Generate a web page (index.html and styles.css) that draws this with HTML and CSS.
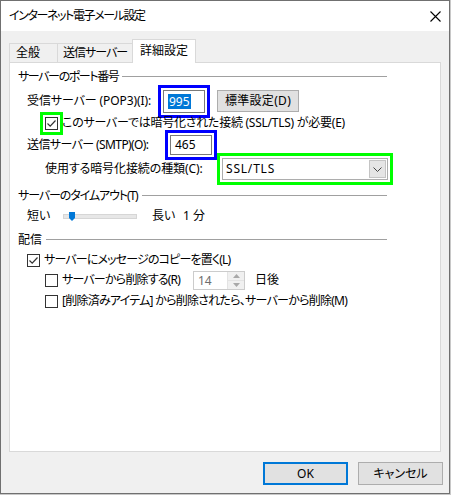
FILE: index.html
```html
<!DOCTYPE html>
<html lang="ja">
<head>
<meta charset="utf-8">
<title>インターネット電子メール設定</title>
<link rel="stylesheet" href="styles.css">
</head>
<body>
<div class="window">
  <div class="titlebar">
    <span class="title">インターネット電子メール設定</span>
    <svg class="close" width="11" height="11" viewBox="0 0 11 11"><path d="M0.5 0.5L10.5 10.5M10.5 0.5L0.5 10.5" stroke="#000" stroke-width="1.1"/></svg>
  </div>
  <div class="content">
    <div class="tabs">
      <div class="tab t1">全般</div>
      <div class="tab t2">送信サーバー</div>
      <div class="tab active">詳細設定</div>
    </div>
    <div class="panel">
      <div class="group g1"><span class="glabel t-port">サーバーのポート番号</span><span class="gline"></span></div>
      <div class="row r1">
        <span class="lbl w1 t-in">受信サーバー (POP3)(I):</span>
        <span class="edit e1 mark-blue"><span class="sel">995</span></span>
        <span class="btn std">標準設定(D)</span>
      </div>
      <div class="row r2">
        <span class="cb mark-green"><svg width="11" height="11" viewBox="0 0 11 11"><path d="M1.5 5.5L4.2 8.2L9.5 2.5" fill="none" stroke="#333" stroke-width="1.2"/></svg></span>
        <span class="cbtext t-ssl">このサーバーでは暗号化された接続 (SSL/TLS) が必要(E)</span>
      </div>
      <div class="row r3">
        <span class="lbl w3 t-out">送信サーバー (SMTP)(O):</span>
        <span class="edit e2 mark-blue">465</span>
      </div>
      <div class="row r4">
        <span class="lbl w4 t-enc">使用する暗号化接続の種類(C):</span>
        <span class="combo mark-green"><span class="ctext">SSL/TLS</span><span class="cbtn"><svg width="9" height="5" viewBox="0 0 9 5"><path d="M0.5 0.5L4.5 4.5L8.5 0.5" fill="none" stroke="#444" stroke-width="1"/></svg></span></span>
      </div>
      <div class="group g2"><span class="glabel t-timeout">サーバーのタイムアウト(T)</span><span class="gline"></span></div>
      <div class="row r5">
        <span class="lbl w5">短い</span>
        <span class="track"><svg class="thumb" width="6" height="9" viewBox="0 0 6 9"><polygon points="0,0 6,0 6,6 3,9 0,6" fill="#0078d7"/></svg></span>
        <span class="lbl w6">長い</span>
        <span class="lbl t-min">1 分</span>
      </div>
      <div class="group g3"><span class="glabel t-plain">配信</span><span class="gline"></span></div>
      <div class="row r6">
        <span class="cb"><svg width="11" height="11" viewBox="0 0 11 11"><path d="M1.5 5.5L4.2 8.2L9.5 2.5" fill="none" stroke="#333" stroke-width="1.2"/></svg></span>
        <span class="cbtext t-copy">サーバーにメッセージのコピーを置く(L)</span>
      </div>
      <div class="row r7">
        <span class="cb"></span>
        <span class="cbtext w7 t-del">サーバーから削除する(R)</span>
        <span class="spin">
          <span class="stext">14</span>
          <span class="sbtns">
            <span class="sbtn"><svg width="7" height="4" viewBox="0 0 7 4"><polygon points="0,4 3.5,0 7,4" fill="#a8a8a8"/></svg></span>
            <span class="sbtn"><svg width="7" height="4" viewBox="0 0 7 4"><polygon points="0,0 3.5,4 7,0" fill="#a8a8a8"/></svg></span>
          </span>
        </span>
        <span class="lbl days">日後</span>
      </div>
      <div class="row r8">
        <span class="cb"></span>
        <span class="cbtext t-delm">[削除済みアイテム] から削除されたら、サーバーから削除(M)</span>
      </div>
    </div>
    <div class="footer">
      <span class="btn big ok">OK</span>
      <span class="btn big">キャンセル</span>
    </div>
  </div>
</div>
</body>
</html>
```

FILE: styles.css
```css
* { box-sizing: border-box; }
html, body { margin: 0; padding: 0; }
body {
  background: #c8c8c8;
  width: 451px;
  height: 495px;
  font-family: "Noto Sans", "Noto Sans CJK JP", sans-serif;
  font-size: 12px;
  letter-spacing: 0;
  color: #000;
  font-feature-settings: "palt";
  line-height: 16px;
}
.window {
  width: 450px;
  height: 494px;
  border: 1px solid #707070;
  background: #f0f0f0;
  display: flex;
  flex-direction: column;
}
.titlebar {
  height: 30px;
  background: #fff;
  display: flex;
  align-items: center;
  padding-left: 8px;
  padding-right: 8px;
}
.title { flex: 1; letter-spacing: -1.4px; }
.close { display: block; }
.content {
  flex: 1;
  padding: 8px 8px 0 8px;
  display: flex;
  flex-direction: column;
}
.tabs {
  display: flex;
  height: 23px;
  align-items: flex-end;
  position: relative;
  z-index: 1;
}
.tab {
  height: 19px;
  border: 1px solid #d9d9d9;
  border-bottom: none;
  background: #f0f0f0;
  display: flex;
  align-items: center;
  white-space: nowrap;
}
.t1 { width: 49px; padding-left: 6px; }
.t2 { width: 74px; border-left: none; border-right: none; padding-left: 5px; letter-spacing: -1px; }
.tab.active {
  width: 64px;
  height: 24px;
  margin-bottom: -1px;
  background: #fff;
  padding-left: 7px;
  padding-bottom: 1px;
}
.panel {
  width: 432px;
  height: 390px;
  border: 1px solid #d9d9d9;
  background: #fff;
  padding-top: 6px;
  display: flex;
  flex-direction: column;
}
.group {
  height: 16px;
  display: flex;
  align-items: center;
  padding-left: 8px;
  margin-right: 53px;
  white-space: nowrap;
}
.g2 { margin-top: 7px; }
.g3 { margin-top: 6px; }
.gline {
  flex: 1;
  height: 1px;
  background: #a0a0a0;
  margin-left: 4px;
  margin-bottom: 2px;
}
.row {
  display: flex;
  align-items: center;
  white-space: nowrap;
}
.r1 { height: 24px; margin-top: 4px; padding-left: 17px; }
.r2 { height: 20px; padding-left: 35px; }
.r3 { height: 24px; padding-left: 17px; }
.r4 { height: 24px; padding-left: 35px; }
.r5 { height: 20px; margin-top: 2px; padding-left: 17px; }
.r6 { height: 20px; margin-top: 2px; padding-left: 17px; }
.r7 { height: 20px; padding-left: 35px; }
.r8 { height: 20px; margin-top: 1px; padding-left: 35px; }
.lbl { display: inline-block; }
.w1 { width: 136px; }
.w3 { width: 143px; }
.w4 { width: 177px; }
.w5 { width: 36px; }
.w6 { width: 31px; margin-left: 15px; }
.w7 { width: 131px; }

/* per-label tracking to match the narrow kana of the original UI font */
.t-port { letter-spacing: -1.4px; }
.t-in { letter-spacing: -0.1px; }
.t-ssl { letter-spacing: -0.25px; }
.t-out { letter-spacing: -0.6px; }
.t-enc { letter-spacing: -0.1px; }
.t-timeout { letter-spacing: -1.1px; }
.t-copy { letter-spacing: -0.85px; }
.t-del { letter-spacing: -0.8px; }
.t-delm { letter-spacing: -0.75px; }
.t-min { letter-spacing: 0; }

.edit {
  display: flex;
  align-items: center;
  width: 42px;
  background: #fff;
  border: 1px solid #7a7a7a;
}
.e1 { height: 23px; padding-left: 4px; }
.e2 { height: 20px; padding-left: 4px; }
.sel {
  background: #0078d7;
  color: #fff;
  padding: 0 1px;
  line-height: 15px;
}
.mark-blue { outline: 3px solid #0000ff; outline-offset: 2px; }
.mark-green { outline: 3px solid #00ff00; outline-offset: 2px; }
.btn {
  display: flex;
  align-items: center;
  justify-content: center;
  background: #e1e1e1;
  border: 1px solid #adadad;
}
.std { width: 82px; height: 22px; margin-left: 12px; letter-spacing: 0.3px; }
.cb {
  width: 13px;
  height: 13px;
  border: 1px solid #333;
  background: #fff;
  margin-right: 4px;
  flex: none;
  display: flex;
  align-items: center;
  justify-content: center;
}
.cb svg { display: block; }
.combo {
  display: flex;
  align-items: center;
  width: 166px;
  height: 22px;
  border: 1px solid #adadad;
  background: #fff;
  padding-left: 3px;
  padding-right: 1px;
}
.ctext { flex: 1; letter-spacing: 0.8px; }
.cbtn {
  width: 17px;
  height: 18px;
  background: #e5e5e5;
  border: 1px solid #c4c4c4;
  display: flex;
  align-items: center;
  justify-content: center;
}
.cbtn svg { display: block; }
.track {
  position: relative;
  width: 74px;
  height: 5px;
  background: #e7e7e7;
  border: 1px solid #d6d6d6;
}
.thumb {
  position: absolute;
  left: 5px;
  top: -3px;
  display: block;
}
.spin {
  display: flex;
  width: 52px;
  height: 19px;
  border: 1px solid #cccccc;
  background: #fff;
  color: #6d6d6d;
}
.stext { flex: 1; padding-left: 4px; line-height: 17px; }
.sbtns {
  width: 17px;
  display: flex;
  flex-direction: column;
  border-left: 1px solid #e3e3e3;
}
.sbtn {
  flex: 1;
  display: flex;
  align-items: center;
  justify-content: center;
  background: #f0f0f0;
}
.sbtn + .sbtn { border-top: 1px solid #e3e3e3; }
.sbtn svg { display: block; }
.days { margin-left: 10px; }
.footer {
  display: flex;
  justify-content: flex-end;
  gap: 10px;
  margin-top: 10px;
  margin-right: -2px;
}
.big { width: 85px; height: 23px; }
.ok { border: 2px solid #0078d7; }
```
